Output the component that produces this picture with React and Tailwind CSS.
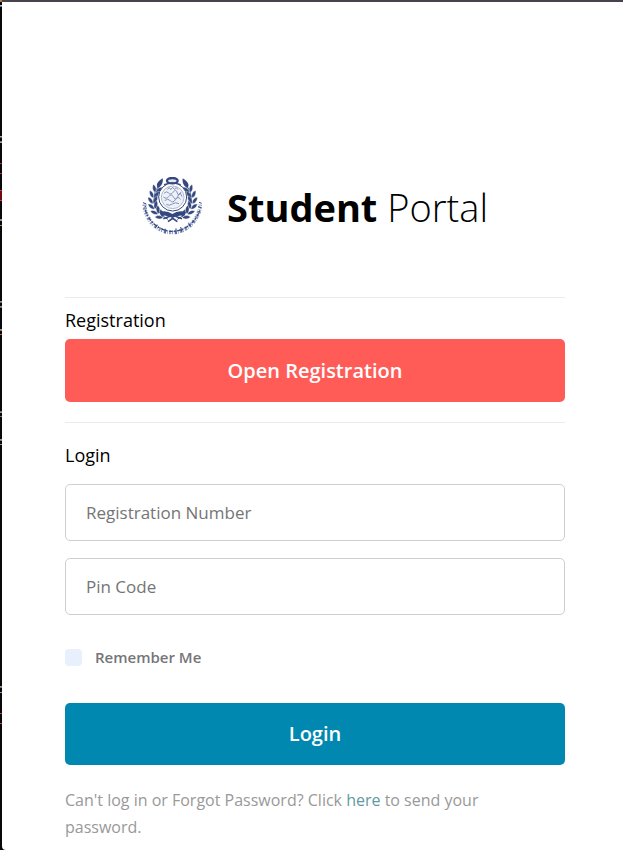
import React from "react";

const INK = "#34487f";

const edgeMarks = [
  [0, 2, "#b07a45"], [5, 1, "#b9c4d0"], [6, 1, "#5a7fa0"],
  [136, 1, "#8fb0c4"], [137, 1, "#6b5a48"], [141, 1, "#8b7355"], [142, 1, "#8fa9bb"],
  [163, 1, "#b0303a"], [173, 1, "#b0303a"],
  [190, 1, "#c0404a"], [191, 9, "#6e0a10"], [200, 1, "#c0404a"],
  [219, 1, "#a5855a"], [220, 1, "#7f9db5"], [225, 1, "#a5855a"],
  [301, 1, "#7f9db5"], [302, 1, "#7a6448"], [306, 1, "#7f9db5"], [307, 1, "#7a6448"],
  [329, 1, "#7f9db5"], [330, 1, "#a5704a"], [334, 1, "#a5704a"],
  [411, 1, "#8a6f50"], [412, 1, "#7f9db5"], [416, 1, "#8a6f50"],
  [439, 1, "#7f9db5"], [440, 1, "#8a6f50"], [444, 1, "#7f9db5"],
  [686, 1, "#7f9db5"], [687, 1, "#8a6f50"], [692, 1, "#7f9db5"],
  [713, 1, "#c0404a"], [723, 1, "#c0404a"],
];

const leaves = [
  [73, 64, 22], [65, 80, 10], [62, 97, -2], [64, 114, -16], [72, 130, -32], [85, 143, -50],
];

function Wreath() {
  return (
    <g>
      <path d="M80 54C58 82 58 126 108 154" fill="none" stroke={INK} strokeWidth="3" />
      {leaves.map(([x, y, a]) => (
        <g key={y} transform={`translate(${x} ${y}) rotate(${a})`} fill={INK} stroke="#fff" strokeWidth="1">
          <path d="M1 10C-8 9-14 1-14-10C-5-9 2-1 1 10Z" />
          <path d="M2 10C-1 0 5-9 14-13C17-3 12 8 2 10Z" />
        </g>
      ))}
      <path d="M78 60C70 52 76 40 92 31C94 44 89 55 78 60Z" fill={INK} />
    </g>
  );
}

function Crest() {
  return (
    <svg className="h-[60px] w-[60px] shrink-0" viewBox="30 27 180 180" role="img" aria-label="University crest">
      <Wreath />
      <g transform="translate(244 0) scale(-1 1)"><Wreath /></g>
      <circle cx="122" cy="87" r="42" fill="#fff" stroke={INK} strokeWidth="3" />
      <ellipse cx="121" cy="38" rx="16" ry="8" fill="#e4e8f1" stroke={INK} strokeWidth="7" />
      <path d="M96 50Q121 41 146 50" fill="none" stroke={INK} strokeWidth="4" />
      <circle cx="122" cy="88" r="34" fill="#eef1f7" stroke="#b1bad2" strokeWidth="3" />
      <g fill="none" stroke="#8793b8" strokeWidth="3">
        <path d="M106 64l6-5 4 6 6-7 5 6 6-5 5 6" />
        <path d="M96 76q8-9 14-1t14-3 12 3 11-3" />
        <path d="M94 87q10 8 17-2t14 3 13-4 12 2" />
        <path d="M98 98q9-9 17 0t15-3 16-1" />
        <path d="M103 109q9 6 18-1t20-1" />
      </g>
      <path d="M82 132Q103 125 121 138Q139 125 162 132L157 143Q136 140 121 150Q107 140 88 143Z" fill={INK} />
      <path d="M94 152l20-7M150 152l-20-7M108 161l14-10 14 10" fill="none" stroke={INK} strokeWidth="5" />
      <path d="M37 110C41 158 78 193 121 193S202 156 206 106" fill="none" stroke="#8793b8" strokeWidth="12" strokeDasharray="3 5 7 3 2 4 5 3" />
      <path d="M40 126C51 164 85 190 121 190S192 163 204 125" fill="none" stroke={INK} strokeWidth="4" strokeDasharray="11 3 6 5" />
      <path d="M33 104l10 4M37 117l6-3M199 115l8 5M201 103l8 3M99 182v15M132 181v17M146 177l4 16M169 164l8 12M76 170l-6 10" fill="none" stroke={INK} strokeWidth="3" />
    </svg>
  );
}

export default function App() {
  return (
    <div className="relative min-h-screen bg-[#08080b] pl-[2px] font-['Open_Sans','Noto_Sans',sans-serif]">
      <svg className="absolute left-0 top-0 h-[850px] w-[2px]" viewBox="0 0 2 850" aria-hidden="true">
        {edgeMarks.map(([y, h, color]) => (
          <rect key={y} x="0" y={y} width="2" height={h} fill={color} />
        ))}
      </svg>
      <main className="min-h-screen rounded-bl-[4px] border-t-2 border-[#49434c] bg-white pl-[63px] pr-[58px] pt-[175px]">
        <header className="flex items-center justify-center gap-[25px]">
          <Crest />
          <h1 className="text-[38px] font-light leading-[60px] text-black">
            <b className="font-bold">Student</b> Portal
          </h1>
        </header>

        <section className="mt-[60px] border-t border-[#ebebeb] pt-2">
          <h2 className="text-[18px] font-medium leading-7 text-black">Registration</h2>
          <button type="button" className="mt-[5px] h-[63px] w-full rounded-[5px] bg-[#ff5c58] text-[20px] font-semibold text-white">
            Open Registration
          </button>
        </section>

        <section className="mt-5 border-t border-[#ebebeb] pt-[18px]">
          <h2 className="text-[18px] font-medium leading-7 text-black">Login</h2>
          <form className="mt-[15px]" onSubmit={(e) => e.preventDefault()}>
            <input
              type="text"
              aria-label="Registration Number"
              placeholder="Registration Number"
              className="block h-[57px] w-full rounded-[5px] border border-[#cfcfcf] bg-white px-5 text-[17px] text-[#444] outline-none placeholder:text-[#757575]"
            />
            <input
              type="password"
              aria-label="Pin Code"
              placeholder="Pin Code"
              className="mt-[17px] block h-[57px] w-full rounded-[5px] border border-[#cfcfcf] bg-white px-5 text-[17px] text-[#444] outline-none placeholder:text-[#757575]"
            />
            <div className="mt-[30px] flex h-6 items-center gap-[13px]">
              <input id="remember" type="checkbox" className="h-[17px] w-[17px] appearance-none rounded-[4px] bg-[#e8effd] checked:bg-[#0088b0]" />
              <label htmlFor="remember" className="text-[15px] font-semibold text-[#757679]">Remember Me</label>
            </div>
            <button type="submit" className="mt-[34px] h-[62px] w-full rounded-[5px] bg-[#0088b0] text-[20px] font-semibold text-white">
              Login
            </button>
          </form>
          <p className="mt-[22px] pr-5 text-[16px] leading-[27px] text-[#999]">
            Can't log in or Forgot Password? Click <a href="#reset" className="text-[#5f9a9e]">here</a> to send your password.
          </p>
        </section>
      </main>
    </div>
  );
}
